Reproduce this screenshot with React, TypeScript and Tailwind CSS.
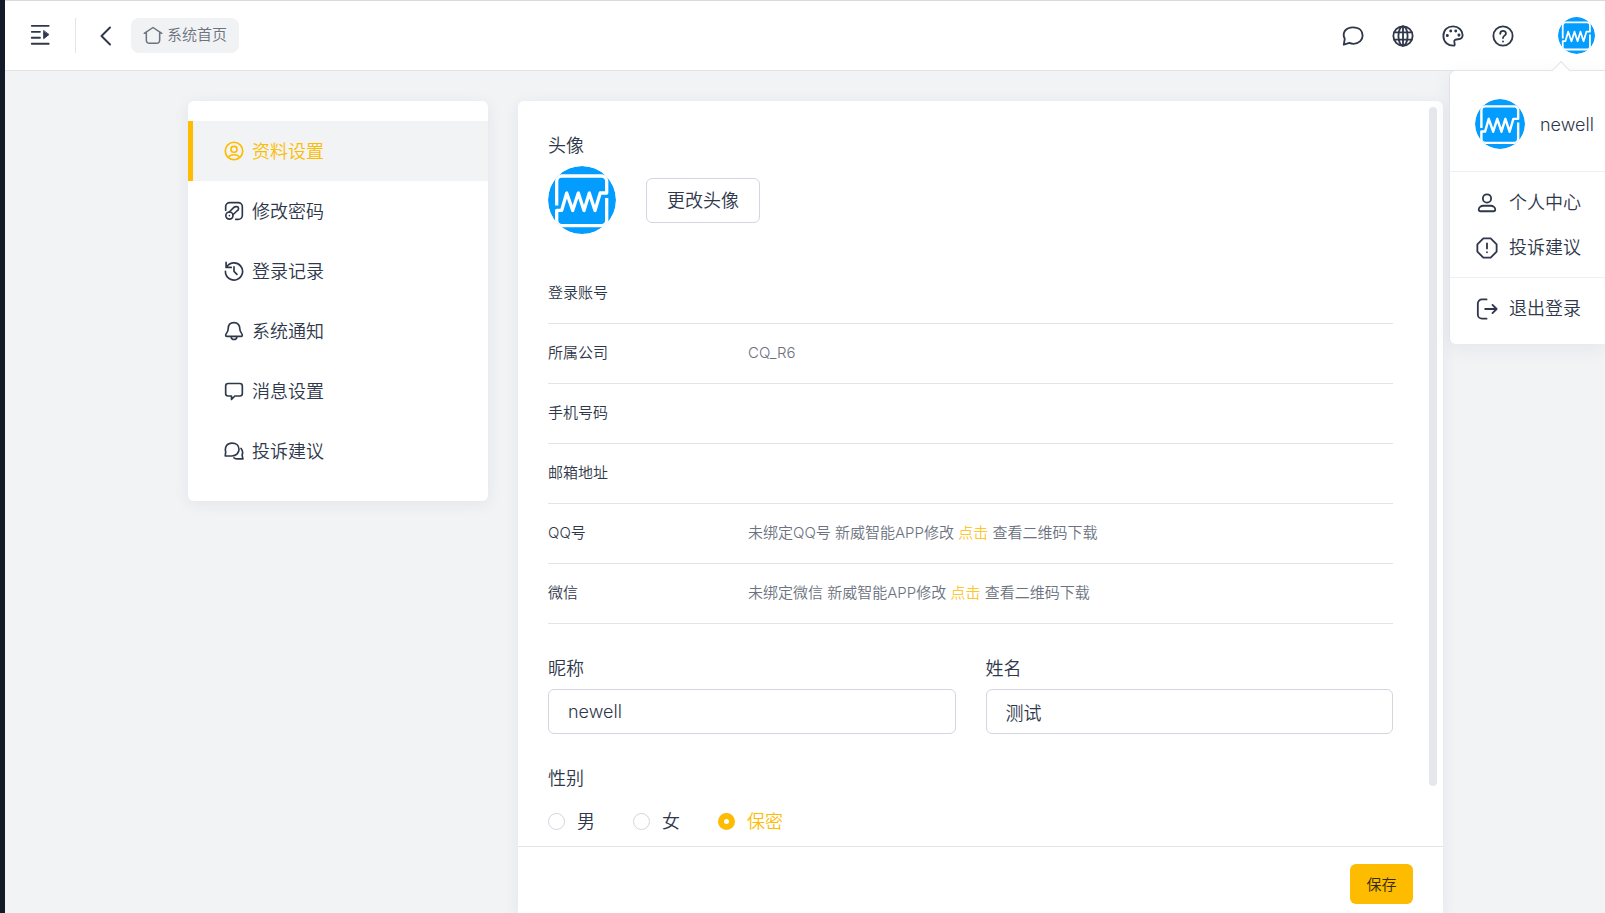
import React from "react";
import type { ReactNode } from "react";

function Icon({ children, className = "size-5" }: { children: ReactNode; className?: string }) {
    return (
        <svg
            viewBox="0 0 24 24"
            fill="none"
            stroke="currentColor"
            strokeWidth="2"
            strokeLinecap="round"
            strokeLinejoin="round"
            aria-hidden="true"
            className={`shrink-0 ${className}`}
        >
            {children}
        </svg>
    )
}

function Avatar({ className }: { className: string }) {
    return (
        <svg viewBox="0 0 68 68" role="img" aria-label="头像" className={`shrink-0 rounded-full ${className}`}>
            <circle cx="34" cy="34" r="34" fill="#039cff" />
            <path
                d="M8.7 39.5V15a5 5 0 0 1 5-5h40a5 5 0 0 1 5 5v12h-6.5L47 44.5l-5.700-17.500L36 44.500l-5.700-17.500L24.700 44.500l-6-17.500-5 17.300h-5V54.700a5 5 0 0 0 5 5h40a5 5 0 0 0 5-5V32"
                fill="none"
                stroke="#fff"
                strokeWidth="3.300"
                strokeLinejoin="round"
            />
        </svg>
    )
}

const menu = [
    {
        name: "资料设置",
        icon: <Icon><circle cx="12" cy="12" r="10.500" /><rect x="8.500" y="6.500" width="7" height="7" rx="3" /><path d="M5.500 19.500c1-2.200 3.300-3 6.500-3s5.500.8 6.500 3" /></Icon>,
    },
    {
        name: "修改密码",
        icon: <Icon><path d="M2 11V7a5 5 0 0 1 5-5h10a5 5 0 0 1 5 5v10a5 5 0 0 1-5 5h-3" /><circle cx="6.500" cy="17.500" r="4.300" /><path d="M6 13.500l5.500-5.500c2-2 6-1.500 6 1 0 1.500-1 2.500-2 3l-4.800 4.500M6.500 17.600v.1" /></Icon>,
    },
    {
        name: "登录记录",
        icon: <Icon><path d="M3 7.500A10.300 10.300 0 1 1 1.700 12.500M2.500 1.500v6.200h6.200M12 7v5.500l3.500 3.500" /></Icon>,
    },
    {
        name: "系统通知",
        icon: <Icon><path d="M12 2c-4.500 0-7 3-7 7.500 0 4-3 5.500-3 7.500 0 1 .5 1.500 1.300 1.500h17.400c.8 0 1.300-.5 1.300-1.500 0-2-3-3.500-3-7.500C19 5 16.500 2 12 2zM8.500 19c.3 2.300 1.500 3.200 3.500 3.200s3.200-.9 3.500-3.200" /></Icon>,
    },
    {
        name: "消息设置",
        icon: <Icon><path d="M5 3h14a3 3 0 0 1 3 3v9a3 3 0 0 1-3 3h-6l-4 4v-4H5a3 3 0 0 1-3-3V6a3 3 0 0 1 3-3z" /></Icon>,
    },
    {
        name: "投诉建议",
        icon: <Icon><path d="M1.500 18l.5-5C.5 7 4 2.500 9.500 2.500S18 6 18 10s-3 8-8.500 8h-8zM20.500 9c2 2.500 2.500 5 1.200 8l1 4.500h-6.200c-2 0-3.500-.5-4.500-1.300" /></Icon>,
    },
]

const tools = [
    {
        name: "消息",
        icon: <Icon className="size-[22px]"><path d="M2 21.500l1-6.500C-.5 8 4.500 2.500 12 2.500S22.500 7 22.500 11.500s-3.500 9-10 9c-2 0-3.500-.5-4.500-1L2 21.500z" /></Icon>,
    },
    {
        name: "语言",
        icon: <Icon className="size-[22px]"><circle cx="12" cy="12" r="10.500" /><ellipse cx="12" cy="12" rx="5" ry="10.500" /><path d="M12 1.500v21M2.500 8h19M2.500 16h19" /></Icon>,
    },
    {
        name: "主题",
        icon: <Icon className="size-[22px]"><path d="M13.500 22.500C6.500 23 1.500 18.500 1.500 12S6 1.500 12 1.500 22.500 6 22.500 11c0 3.500-2.500 4.500-5 4.500-3 0-4.800 1-4 3.500.4 1.200.8 2 0 3.500z" /><path d="M9.500 6.500v.1M15 6.500v.1M5.800 11.500v.1M18.500 11v.1" strokeWidth="3.200" /></Icon>,
    },
    {
        name: "帮助",
        icon: <Icon className="size-[22px]"><circle cx="12" cy="12" r="10.500" /><path d="M9 9.500c0-4 6.200-4 6.200-.3 0 2.500-3.200 2.300-3.200 5M12 17.800v.2" /></Icon>,
    },
]

const tip = (
    <>
        {" "}新威智能APP修改{" "}
        <a href="#" className="text-[#fec52e]">点击</a>
        {" "}查看二维码下载
    </>
)

const rows = [
    { label: "登录账号", value: null },
    { label: "所属公司", value: "CQ_R6" },
    { label: "手机号码", value: null },
    { label: "邮箱地址", value: null },
    { label: "QQ号", value: <>未绑定QQ号{tip}</> },
    { label: "微信", value: <>未绑定微信{tip}</> },
]

const genders = ["男", "女", "保密"]

function Header() {
    return (
        <header className="flex h-[71px] shrink-0 items-center justify-between border-y border-t-[#d9dadc] border-b-[#e3e4e8] bg-white pr-[10px] pl-6">
            <div className="flex items-center">
                <button aria-label="展开菜单" className="pr-0.5 pb-0.5">
                    <Icon className="size-[22px]">
                        <path d="M3 2h18.500M3 8.500h9M3 15h9M3 21.500h18.500" />
                        <path d="M16 7.500v8.500l5.500-4.250z" fill="currentColor" strokeWidth="1" />
                    </Icon>
                </button>
                <span className="ml-[22px] h-[35px] w-px bg-[#e3e4e8]" />
                <button aria-label="返回" className="ml-[18px]">
                    <Icon className="size-6"><path d="M16 3.500L7.500 12l8.500 8.500" /></Icon>
                </button>
                <a href="#" className="ml-[13px] flex h-[35px] items-center gap-1 rounded-lg bg-[#f1f2f4] px-3 pb-0.5 text-[15px] text-[#6b7280]">
                    <Icon><path d="M1.500 10L12 3l10.500 7M4 9.500V18a4 4 0 0 0 4 4h8a4 4 0 0 0 4-4V9.500" strokeWidth="1.800" /></Icon>
                    系统首页
                </a>
            </div>
            <div className="flex items-center">
                {tools.map((tool) => (
                    <button key={tool.name} aria-label={tool.name} className="flex w-[50px] justify-center">
                        {tool.icon}
                    </button>
                ))}
                <button aria-label="newell" className="ml-[30px]">
                    <Avatar className="size-[37px]" />
                </button>
            </div>
        </header>
    )
}

function UserMenu() {
    return (
        <div className="absolute top-[70px] right-0 w-[156px] rounded-bl-md rounded-tl-md border-t border-l border-[#e3e4e8] bg-white whitespace-nowrap shadow-[0_5px_20px_rgba(30,40,80,0.06)]">
            <span className="absolute -top-[7px] left-[104px] size-[14px] rotate-45 border-t border-l border-[#e3e4e8] bg-white" />
            <div className="relative flex h-[101px] items-center gap-[15px] border-b border-[#eff0f2] pt-[6px] pl-[25px]">
                <Avatar className="size-[50px]" />
                <span>newell</span>
            </div>
            <div className="border-b border-[#eff0f2] pt-2 pb-[7px] pl-[26px]">
                <a href="#" className="flex h-[45px] items-center gap-[11px]">
                    <Icon className="size-[22px]"><circle cx="12" cy="7" r="4.500" /><path d="M8 15h8c2.800 0 5 2 5 4 0 1.500-1 2-2 2H5c-1 0-2-.5-2-2 0-2 2.200-4 5-4z" /></Icon>
                    个人中心
                </a>
                <a href="#" className="flex h-[45px] items-center gap-[11px]">
                    <Icon className="size-[22px]"><path d="M8 1.500h8L22.500 8v8L16 22.500H8L1.500 16V8zM12 7v5.500M12 16.500v.2" /></Icon>
                    投诉建议
                </a>
            </div>
            <div className="pt-2 pb-[13px] pl-[26px]">
                <a href="#" className="flex h-[45px] items-center gap-[11px]">
                    <Icon className="size-[22px]"><path d="M11.500 1.500H6.500a4.500 4.500 0 0 0-4.500 4.500v12a4.500 4.500 0 0 0 4.500 4.500h5M10 12h12.500M18 7.500l4.500 4.500-4.500 4.500" /></Icon>
                    退出登录
                </a>
            </div>
        </div>
    )
}

export default function App() {
    const [active, setActive] = React.useState("资料设置")
    const [gender, setGender] = React.useState("保密")
    const [user, setUser] = React.useState({
        nickname: "newell",
        realname: "测试"
    })

    return (
        <div className="relative flex h-screen overflow-hidden bg-[#f2f3f5] font-['Inter','Noto_Sans_CJK_SC',sans-serif] text-[18px] leading-[27px] font-[350] text-[#2f384b]">
            <div className="w-[5px] shrink-0 bg-[#141a27]" />
            <div className="flex min-w-0 flex-1 flex-col">
                <Header />
                <div className="flex min-h-0 flex-1 items-start gap-[30px] pt-[30px] pr-[162px] pl-[183px]">
                    <nav className="w-[300px] shrink-0 rounded-md bg-white py-5 shadow-[0_3px_16px_rgba(30,40,80,0.07)]">
                        {menu.map((item) => (
                            <button
                                key={item.name}
                                onClick={() => setActive(item.name)}
                                className={`flex h-[60px] w-full items-center gap-2 border-l-[5px] pl-[31px] ${active === item.name ? "border-[#fdbc00] bg-[#f2f3f5] text-[#fdbc00]" : "border-transparent"}`}
                            >
                                {item.icon}
                                {item.name}
                            </button>
                        ))}
                    </nav>

                    <form onSubmit={(e) => e.preventDefault()} className="relative flex h-full min-w-0 flex-1 flex-col rounded-t-md bg-white shadow-[0_3px_16px_rgba(30,40,80,0.07)]">
                        <div className="min-h-0 flex-1 overflow-hidden pt-[31px] pr-[50px] pl-[30px]">
                            <p className="mb-[7px]">头像</p>
                            <div className="flex items-center gap-[30px]">
                                <Avatar className="size-[68px]" />
                                <button type="button" className="h-[45px] rounded-md border border-[#d3d6de] px-5">更改头像</button>
                            </div>

                            <dl className="mt-[30px] text-[15px]">
                                {rows.map((row) => (
                                    <div key={row.label} className="flex h-[60px] items-center border-b border-[#e3e4e8] pb-0.5">
                                        <dt className="w-[200px] shrink-0">{row.label}</dt>
                                        <dd className="text-[#6b7280]">{row.value}</dd>
                                    </div>
                                ))}
                            </dl>

                            <div className="mt-[31px] grid grid-cols-2 gap-[30px]">
                                <div>
                                    <label htmlFor="nickname" className="mb-[7px] block">昵称</label>
                                    <input
                                        id="nickname"
                                        type="text"
                                        value={user.nickname}
                                        onChange={(e) => setUser({ ...user, nickname: e.target.value })}
                                        className="h-[45px] w-full rounded-md border border-[#d3d6de] px-[19px] focus:outline-none"
                                    />
                                </div>
                                <div>
                                    <label htmlFor="realname" className="mb-[7px] block">姓名</label>
                                    <input
                                        id="realname"
                                        type="text"
                                        value={user.realname}
                                        onChange={(e) => setUser({ ...user, realname: e.target.value })}
                                        className="h-[45px] w-full rounded-md border border-[#d3d6de] px-[19px] focus:outline-none"
                                    />
                                </div>
                            </div>

                            <fieldset className="mt-[31px]">
                                <legend className="mb-4">性别</legend>
                                <div className="flex gap-[37px]">
                                    {genders.map((g) => (
                                        <label key={g} className={`flex items-center gap-3 pr-px ${gender === g ? "text-[#fdbc00]" : ""}`}>
                                            <input
                                                type="radio"
                                                name="gender"
                                                checked={gender === g}
                                                onChange={() => setGender(g)}
                                                className="size-[17px] appearance-none rounded-full border border-[#d3d6de] bg-white checked:border-[6px] checked:border-[#fdbc00]"
                                            />
                                            {g}
                                        </label>
                                    ))}
                                </div>
                            </fieldset>
                        </div>

                        {/* scrollbar thumb */}
                        <span className="absolute top-[6px] right-[6px] bottom-[127px] w-2 rounded-full bg-[#e6e7ec]" />

                        <div className="flex h-[67px] shrink-0 items-end justify-end border-t border-[#e3e4e8] pr-[30px] pb-[9px]">
                            <button type="submit" className="h-10 w-[63px] rounded-md bg-[#fdbc00] text-[15px] text-[#352b10]">保存</button>
                        </div>
                    </form>
                </div>
            </div>
            <UserMenu />
        </div>
    )
}
